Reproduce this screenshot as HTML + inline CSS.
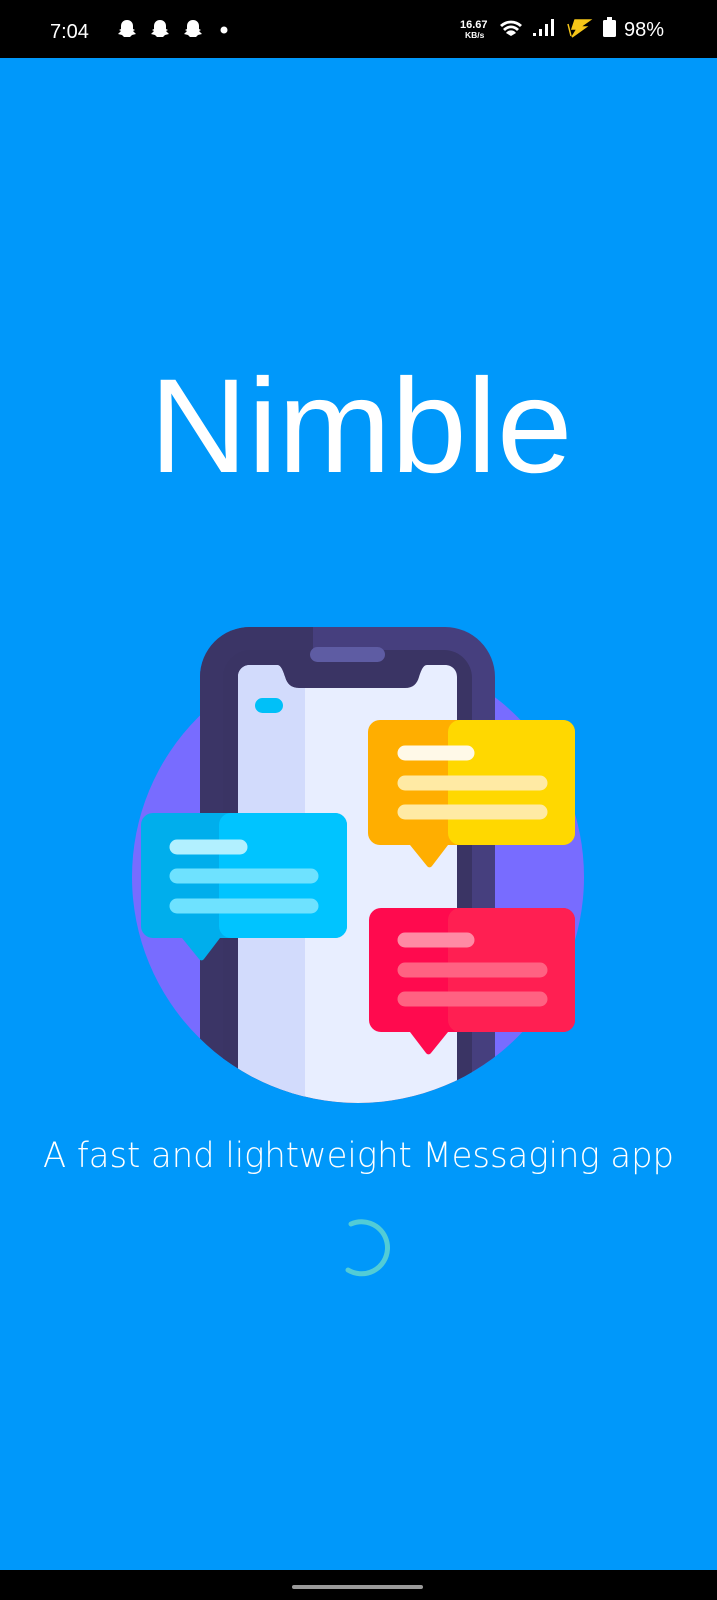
<!DOCTYPE html>
<html><head><meta charset="utf-8"><style>
html,body{margin:0;padding:0}
body{width:717px;height:1600px;background:#0098FA;position:relative;overflow:hidden;font-family:"Liberation Sans",sans-serif}
.sb{position:absolute;left:0;top:0;width:717px;height:58px;background:#000}
.nb{position:absolute;left:0;top:1570px;width:717px;height:30px;background:#000}
</style></head><body>
<div class="sb">
<svg width="717" height="58" style="position:absolute;left:0;top:0">
<text x="50" y="38" fill="#fff" font-size="20" font-family="Liberation Sans">7:04</text>
<g fill="#fff">
<path d="M127 20c-4 0-6 3-6 6v3l-2 1 2 1-3 3 4 1 2 2h6l2-2 4-1-3-3 2-1-2-1v-3c0-3-2-6-6-6z"/>
<path d="M160 20c-4 0-6 3-6 6v3l-2 1 2 1-3 3 4 1 2 2h6l2-2 4-1-3-3 2-1-2-1v-3c0-3-2-6-6-6z"/>
<path d="M193 20c-4 0-6 3-6 6v3l-2 1 2 1-3 3 4 1 2 2h6l2-2 4-1-3-3 2-1-2-1v-3c0-3-2-6-6-6z"/>
<circle cx="224" cy="30" r="3.5"/>
<text x="460" y="28" font-size="11" font-weight="bold">16.67</text>
<text x="465" y="38" font-size="8.5" font-weight="bold">KB/s</text>
<path d="M500 25a16 16 0 0 1 22 0l-2 2a13 13 0 0 0-18 0z M503 29a11 11 0 0 1 16 0l-2 2a8 8 0 0 0-12 0z M506 33a6 6 0 0 1 10 0l-5 3z"/>
<rect x="533" y="33" width="3" height="3"/><rect x="539" y="29" width="3" height="7"/><rect x="545" y="24" width="3" height="12"/><rect x="551" y="19" width="3" height="17"/>
<rect x="603" y="20" width="13" height="17" rx="1.5"/><rect x="607" y="17" width="5" height="3"/>
<text x="624" y="36" font-size="20">98%</text>
</g>
<path d="M575 20h15l-10 7h6l-14 10 5-8h-5z M568 24l3 12" fill="#F5C518" stroke="#F5C518" stroke-width="1.5"/>
</svg>
</div>

<svg width="717" height="1600" style="position:absolute;left:0;top:0">
<text x="361" y="472" text-anchor="middle" fill="#fff" font-size="134" textLength="423" lengthAdjust="spacingAndGlyphs" font-family="Liberation Sans">Nimble</text>
<defs><clipPath id="c"><circle cx="358" cy="877" r="226"/><rect x="180" y="600" width="340" height="280"/></clipPath></defs>
<circle cx="358" cy="877" r="226" fill="#786CFF"/>
<g clip-path="url(#c)">
<rect x="200" y="627" width="295" height="560" rx="50" fill="#463F7E"/>
<path d="M250 627h63v560h-113v-510a50 50 0 0 1 50-50z" fill="#3B3566"/>
<rect x="223" y="650" width="249" height="520" rx="28" fill="#3A3464"/>
<path d="M256 665h21c4 0 6 6 8 12 2 7 6 11 14 11h106c8 0 12-4 14-11 2-6 4-12 8-12h18c7 0 12 5 12 12v520h-219v-520c0-7 5-12 12-12z" fill="#E8EEFF"/>
<path d="M250 665h27c4 0 6 6 8 12 2 7 6 11 14 11h6v520h-67v-531c0-7 5-12 12-12z" fill="#D2DBFC"/>
<rect x="310" y="647" width="75" height="15" rx="7.5" fill="#5E5CA3"/>
<rect x="255" y="698" width="28" height="15" rx="7.5" fill="#00C0F8"/>
</g>
<!-- yellow -->
<path d="M380 720h183a12 12 0 0 1 12 12v101a12 12 0 0 1-12 12h-115l-16 21a3 3 0 0 1-5 0l-17-21h-30a12 12 0 0 1-12-12v-101a12 12 0 0 1 12-12z" fill="#FFAE00"/>
<path d="M460 720h103a12 12 0 0 1 12 12v101a12 12 0 0 1-12 12h-103a12 12 0 0 1-12-12v-101a12 12 0 0 1 12-12z" fill="#FFD800"/>
<g stroke-linecap="round" stroke-width="15">
<line x1="405" y1="753" x2="467" y2="753" stroke="#FFF9E8"/>
<line x1="405" y1="783" x2="540" y2="783" stroke="#FFEAA4"/>
<line x1="405" y1="812" x2="540" y2="812" stroke="#FFEAA4"/>
</g>
<!-- cyan -->
<path d="M153 813h182a12 12 0 0 1 12 12v101a12 12 0 0 1-12 12h-115l-16 21a3 3 0 0 1-5 0l-17-21h-29a12 12 0 0 1-12-12v-101a12 12 0 0 1 12-12z" fill="#00AEEC"/>
<path d="M231 813h104a12 12 0 0 1 12 12v101a12 12 0 0 1-12 12h-104a12 12 0 0 1-12-12v-101a12 12 0 0 1 12-12z" fill="#00C4FF"/>
<g stroke-linecap="round" stroke-width="15">
<line x1="177" y1="847" x2="240" y2="847" stroke="#B2F0FF"/>
<line x1="177" y1="876" x2="311" y2="876" stroke="#6EE2FF"/>
<line x1="177" y1="906" x2="311" y2="906" stroke="#6EE2FF"/>
</g>
<!-- red -->
<path d="M381 908h182a12 12 0 0 1 12 12v100a12 12 0 0 1-12 12h-115l-17 21a3 3 0 0 1-5 0l-16-21h-29a12 12 0 0 1-12-12v-100a12 12 0 0 1 12-12z" fill="#FF0A4E"/>
<path d="M460 908h103a12 12 0 0 1 12 12v100a12 12 0 0 1-12 12h-103a12 12 0 0 1-12-12v-100a12 12 0 0 1 12-12z" fill="#FF1F52"/>
<g stroke-linecap="round" stroke-width="15">
<line x1="405" y1="940" x2="467" y2="940" stroke="#FF8AA4"/>
<line x1="405" y1="970" x2="540" y2="970" stroke="#FF6282"/>
<line x1="405" y1="999" x2="540" y2="999" stroke="#FF6282"/>
</g>
<text x="43" y="1167" fill="#fff" font-size="35" textLength="631" lengthAdjust="spacingAndGlyphs" font-family="DejaVu Sans" font-weight="200" style="font-weight:200">A fast and lightweight Messaging app</text>
<path d="M351 1224 A26 26 0 1 1 348 1270" fill="none" stroke="#52CCD6" stroke-width="5" stroke-linecap="round"/>
</svg>
<div class="nb"><div style="position:absolute;left:292px;top:15px;width:131px;height:4px;border-radius:2px;background:#9a9a9a"></div></div>
</body></html>
